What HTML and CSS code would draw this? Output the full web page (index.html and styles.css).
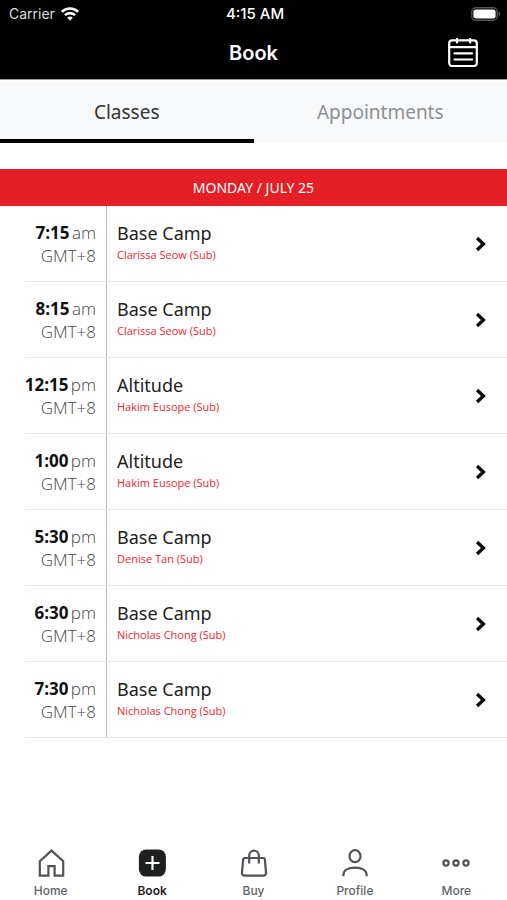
FILE: index.html
```
<!DOCTYPE html>
<html lang="en">
<head>
    <meta charset="UTF-8">
    <meta name="viewport" content="width=device-width, initial-scale=1.0">
    <title>Book</title>
    <link rel="stylesheet" href="styles.css">
</head>
<body>
    <header class="header">
        <div class="status-bar">
            <div class="carrier">
                <span>Carrier</span>
                <svg width="18" height="14" viewBox="0 0 18 14" fill="none" stroke="#fff" stroke-width="2.6">
                    <path d="M.9 4.800a11.500 11.500 0 0 1 16.200 0"/>
                    <path d="M3.900 8.200a7.200 7.200 0 0 1 10.200 0"/>
                    <path d="M6.200 10.800a4 4 0 0 1 5.600 0L9 13.800z" fill="#fff" stroke="none"/>
                </svg>
            </div>
            <span class="clock">4:15 AM</span>
            <svg class="battery" width="30" height="14" viewBox="0 0 30 14">
                <rect x=".8" y=".8" width="25.4" height="12.4" rx="4" fill="none" stroke="#555" stroke-width="1.4"/>
                <rect x="2.4" y="2.4" width="22.2" height="9.2" rx="2.4" fill="#fff"/>
                <path d="M27.6 4.6c2.2.8 2.2 4 0 4.8z" fill="#555"/>
            </svg>
        </div>
        <div class="nav-bar">
            <h1>Book</h1>
            <button class="calendar-button" aria-label="Calendar">
                <svg width="30" height="30" viewBox="0 0 30 30" fill="none" stroke="#fff" stroke-width="2.2" stroke-linecap="round">
                    <rect x="1.200" y="2.400" width="27.600" height="25.600" rx="3"/>
                    <path d="M1.500 9.200h27M9 1v3.600M22.200 1v3.600"/>
                    <path d="M6.500 15.400h17.500M6.500 21.500h17.500"/>
                </svg>
            </button>
        </div>
    </header>

    <div class="tabs">
        <button class="tab active">Classes</button>
        <button class="tab">Appointments</button>
    </div>

    <main class="schedule">
        <h2 class="day">MONDAY / JULY 25</h2>
        <ul class="class-list">
            <li><a href="#" class="class-row">
                <span class="time"><span><b>7:15</b> am</span><span>GMT+8</span></span>
                <span class="details"><span class="name">Base Camp</span><span class="coach">Clarissa Seow (Sub)</span></span>
                <svg class="chevron" width="12" height="16" viewBox="0 0 12 16"><path d="M2 2l6.4 6L2 14"/></svg>
            </a></li>
            <li><a href="#" class="class-row">
                <span class="time"><span><b>8:15</b> am</span><span>GMT+8</span></span>
                <span class="details"><span class="name">Base Camp</span><span class="coach">Clarissa Seow (Sub)</span></span>
                <svg class="chevron" width="12" height="16" viewBox="0 0 12 16"><path d="M2 2l6.4 6L2 14"/></svg>
            </a></li>
            <li><a href="#" class="class-row">
                <span class="time"><span><b>12:15</b> pm</span><span>GMT+8</span></span>
                <span class="details"><span class="name">Altitude</span><span class="coach">Hakim Eusope (Sub)</span></span>
                <svg class="chevron" width="12" height="16" viewBox="0 0 12 16"><path d="M2 2l6.4 6L2 14"/></svg>
            </a></li>
            <li><a href="#" class="class-row">
                <span class="time"><span><b>1:00</b> pm</span><span>GMT+8</span></span>
                <span class="details"><span class="name">Altitude</span><span class="coach">Hakim Eusope (Sub)</span></span>
                <svg class="chevron" width="12" height="16" viewBox="0 0 12 16"><path d="M2 2l6.4 6L2 14"/></svg>
            </a></li>
            <li><a href="#" class="class-row">
                <span class="time"><span><b>5:30</b> pm</span><span>GMT+8</span></span>
                <span class="details"><span class="name">Base Camp</span><span class="coach">Denise Tan (Sub)</span></span>
                <svg class="chevron" width="12" height="16" viewBox="0 0 12 16"><path d="M2 2l6.4 6L2 14"/></svg>
            </a></li>
            <li><a href="#" class="class-row">
                <span class="time"><span><b>6:30</b> pm</span><span>GMT+8</span></span>
                <span class="details"><span class="name">Base Camp</span><span class="coach">Nicholas Chong (Sub)</span></span>
                <svg class="chevron" width="12" height="16" viewBox="0 0 12 16"><path d="M2 2l6.4 6L2 14"/></svg>
            </a></li>
            <li><a href="#" class="class-row">
                <span class="time"><span><b>7:30</b> pm</span><span>GMT+8</span></span>
                <span class="details"><span class="name">Base Camp</span><span class="coach">Nicholas Chong (Sub)</span></span>
                <svg class="chevron" width="12" height="16" viewBox="0 0 12 16"><path d="M2 2l6.4 6L2 14"/></svg>
            </a></li>
        </ul>
    </main>

    <!-- Bottom navigation -->
    <nav class="bottom-nav">
        <a href="#" class="nav-item">
            <svg width="28" height="28" viewBox="0 0 28 28"><path d="M2.800 12.200L14.500 1.600l11.700 10.600v14.400h-8.600v-9.400h-6.200v9.400H2.800z"/></svg>
            <span>Home</span>
        </a>
        <a href="#" class="nav-item active">
            <svg width="28" height="28" viewBox="0 0 28 28">
                <rect x="0.900" y="0.400" width="27" height="27.200" rx="7.500" fill="#1d1f21" stroke="none"/>
                <path d="M14.500 7v14M7.500 14h14" stroke="#fff"/>
            </svg>
            <span>Book</span>
        </a>
        <a href="#" class="nav-item">
            <svg width="28" height="28" viewBox="0 0 28 28">
                <path d="M4.600 9h18.800q1.200 0 1.400 1.200l1.200 13.200q.3 3.200-2.800 3.200H4.800q-3.100 0-2.800-3.200l1.200-13.200Q3.400 9 4.600 9z"/>
                <path d="M9.200 14.500V6.400a4.800 4.800 0 0 1 9.600 0v8.100"/>
            </svg>
            <span>Buy</span>
        </a>
        <a href="#" class="nav-item">
            <svg width="28" height="28" viewBox="0 0 28 28">
                <ellipse cx="14" cy="7.200" rx="5.500" ry="6"/>
                <path d="M2.400 27.200v-1.200c0-4.400 4.200-7.400 11.600-7.400s11.600 3 11.600 7.400v1.200"/>
            </svg>
            <span>Profile</span>
        </a>
        <a href="#" class="nav-item">
            <svg width="28" height="28" viewBox="0 0 28 28">
                <circle cx="4" cy="14" r="2.600"/>
                <circle cx="14" cy="14" r="2.600"/>
                <circle cx="24" cy="14" r="2.600"/>
            </svg>
            <span>More</span>
        </a>
    </nav>
</body>
</html>
```

FILE: styles.css
```
* {
    box-sizing: border-box;
}
body {
    font-family: "Open Sans", sans-serif;
    margin: 0;
    min-height: 100vh;
    display: flex;
    flex-direction: column;
    background-color: #fff;
    color: #222;
}
a {
    color: inherit;
    text-decoration: none;
}
button {
    font: inherit;
    border: none;
    background: none;
    padding: 0;
    cursor: pointer;
}

/* Header */
.header {
    background-color: #000;
    color: #fff;
    font-family: Inter, sans-serif;
    border-bottom: 1px solid #999;
}
.status-bar, .nav-bar {
    display: grid;
    grid-template-columns: 1fr auto 1fr;
    align-items: center;
}
.status-bar {
    height: 27px;
    padding: 0 6px 0 9px;
}
.carrier {
    display: flex;
    align-items: center;
    gap: 6px;
    font-size: 14px;
    color: #ddd;
}
.clock {
    font-size: 15px;
    font-weight: 500;
}
.battery {
    justify-self: end;
}
.nav-bar {
    height: 52px;
    padding: 0 29px;
}
.nav-bar h1 {
    grid-column: 2;
    margin: 0;
    font-size: 20px;
    font-weight: 600;
}
.calendar-button {
    justify-self: end;
    display: flex;
}

/* Tabs */
.tabs {
    display: flex;
    margin-top: 2px;
    background-color: #f8f9fb;
}
.tab {
    flex: 1;
    height: 61px;
    padding-top: 2px;
    border-bottom: 4px solid transparent;
    font-family: "Noto Sans", sans-serif;
    font-size: 19px;
    color: #8e9093;
}
.tab.active {
    color: #333;
    border-bottom-color: #000;
}

/* Class list */
.schedule {
    flex: 1;
    padding-top: 26px;
}
.day {
    margin: 0;
    background-color: #e31e24;
    color: #fff;
    font-family: "Noto Sans", sans-serif;
    font-size: 14px;
    font-weight: 400;
    line-height: 37px;
    text-align: center;
}
.class-list {
    list-style: none;
    margin: 0;
    padding: 0 0 0 25px;
}
.class-row {
    display: flex;
    height: 76px;
    border-bottom: 1px solid #e6e6e6;
}
.time {
    display: flex;
    flex-direction: column;
    align-items: flex-end;
    width: 82px;
    padding: 15px 10px 0 0;
    border-right: 1px solid #bbb;
    font-size: 17px;
    font-weight: 300;
    line-height: 23px;
    white-space: nowrap;
    color: #444;
}
.time b {
    font-weight: 700;
    color: #111;
    margin-right: -2px;
}
.details {
    display: flex;
    flex-direction: column;
    flex: 1;
    padding: 14px 0 0 10px;
}
.name {
    font-family: "Noto Sans", sans-serif;
    font-size: 18px;
    line-height: 26px;
}
.coach {
    font-size: 11px;
    line-height: 18px;
    color: #f0262c;
}
.chevron {
    align-self: center;
    margin-right: 20px;
    fill: none;
    stroke: #111;
    stroke-width: 3.4;
}

/* Bottom navigation */
.bottom-nav {
    display: flex;
    padding-bottom: 1px;
}
.nav-item {
    flex: 1;
    display: flex;
    flex-direction: column;
    align-items: center;
    gap: 6px;
    font-family: Inter, sans-serif;
    font-size: 12px;
    font-weight: 500;
    line-height: 16px;
    color: #606367;
}
.nav-item svg {
    fill: none;
    stroke: #505357;
    stroke-width: 2.2;
}
.nav-item.active {
    color: #222;
    font-weight: 600;
}
```
